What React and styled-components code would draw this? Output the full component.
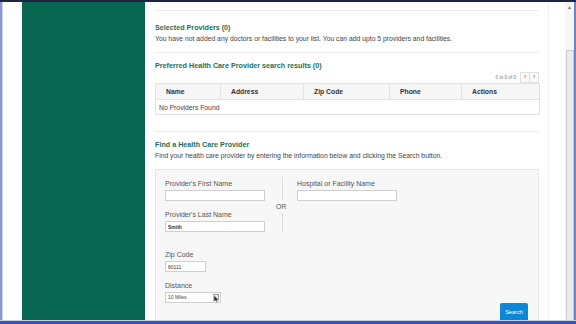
import styled, { createGlobalStyle } from "styled-components";

const GlobalStyle = createGlobalStyle`
  html, body {
    margin: 0;
    padding: 0;
    overflow: hidden;
    background: #ffffff;
    font-family: "Liberation Sans", Arial, sans-serif;
  }
`;

const Screen = styled.div`
  width: 576px;
  height: 324px;
  display: flex;
  flex-direction: column;
  overflow: hidden;
`;

const TopEdge = styled.div`
  height: 2px;
  background: #1c2640;
  flex-shrink: 0;
`;

const BottomEdge = styled.div`
  height: 3px;
  flex-shrink: 0;
  background: #3b55b5;
  border-top: 1px solid #c7cdee;
`;

const Middle = styled.div`
  flex: 1;
  display: flex;
  min-height: 0;
`;

const LeftEdge = styled.div`
  width: 20px;
  background: #ffffff;
  border-left: 2px solid #8c97d6;
  box-shadow: inset 1px 0 0 #cfd4f2;
`;

const Sidebar = styled.div`
  width: 123px;
  background: #076650;
`;

const Main = styled.div`
  flex: 1;
  background: #ffffff;
  display: flex;
  overflow: hidden;
`;

const Content = styled.div`
  width: 384px;
  margin-left: 10px;
  display: flex;
  flex-direction: column;
`;

const Gutter = styled.div`
  width: 9px;
`;

const PageLine = styled.div`
  width: 1px;
  background: #f1f1f1;
`;

const Scrollbar = styled.div`
  width: 11px;
  margin-left: auto;
  background: #f6f6f6;
  border-right: 2px solid #6f80cf;
  display: flex;
  flex-direction: column;
  align-items: center;
  box-sizing: border-box;
`;

const ScrollArrow = styled.div`
  font-size: 5px;
  color: #777;
  height: 10px;
  line-height: 10px;
`;

const ScrollThumb = styled.div`
  margin-top: 38px;
  width: 8px;
  flex: 1;
  background: #ececec;
  border: 1px solid #c5c9d8;
  border-bottom: none;
  box-sizing: border-box;
`;

const Rule = styled.div`
  height: 1px;
  background: #ececec;
  margin-top: ${p => p.$top}px;
`;

const Heading = styled.div`
  font-size: 7.2px;
  font-weight: bold;
  color: #236e5b;
  margin-top: ${p => p.$top}px;
  line-height: 8px;
`;

const Text = styled.div`
  font-size: 6.8px;
  color: #444;
  margin-top: 3px;
  line-height: 8px;
  white-space: nowrap;
`;

const Pager = styled.div`
  display: flex;
  justify-content: flex-end;
  align-items: center;
  gap: 5px;
  margin-top: 2px;
  height: 10px;
`;

const PagerInfo = styled.span`
  font-size: 4.6px;
  color: #777;
`;

const PagerButtons = styled.div`
  display: flex;
`;

const PagerButton = styled.div`
  width: 8px;
  height: 9px;
  border: 1px solid #e0e0e0;
  margin-left: -1px;
  font-size: 6.5px;
  line-height: 8px;
  text-align: center;
  color: #666;
  background: #fafafa;
`;

const Table = styled.table`
  width: 384px;
  border-collapse: collapse;
  margin-top: 1px;
  table-layout: fixed;
  font-size: 6.8px;
`;

const Th = styled.th`
  width: ${p => p.$w - 11}px;
  height: 15px;
  padding: 0 0 0 10px;
  text-align: left;
  background: #f6f6f6;
  border: 1px solid #e3e3e3;
  color: #333;
  font-weight: bold;
`;

const Td = styled.td`
  height: 14px;
  padding: 0 0 0 3px;
  border: 1px solid #e3e3e3;
  color: #444;
`;

const Panel = styled.div`
  margin-top: 9px;
  flex: 1;
  background: #f7f7f7;
  border: 1px solid #e6e6e6;
  border-bottom: none;
  padding: 7px 9px 0 9px;
  display: flex;
  flex-direction: column;
`;

const NameRow = styled.div`
  display: flex;
`;

const Column = styled.div`
  display: flex;
  flex-direction: column;
  width: 100px;
`;

const OrColumn = styled.div`
  width: 32px;
  display: flex;
  flex-direction: column;
  align-items: center;
`;

const OrLine = styled.div`
  width: 1px;
  background: #dcdcdc;
  height: ${p => p.$h}px;
  margin-left: 2px;
`;

const OrText = styled.div`
  font-size: 6.8px;
  color: #555;
  line-height: 13px;
`;

const Label = styled.div`
  font-size: 7px;
  color: #555;
  line-height: 8px;
  margin-top: ${p => p.$top || 0}px;
`;

const Input = styled.input`
  width: ${p => p.$w}px;
  height: 11px;
  box-sizing: border-box;
  margin: 2px 0 0 0;
  padding: 0 2px;
  border: 1px solid #cfcfcf;
  background: #ffffff;
  font-family: "Liberation Sans", Arial, sans-serif;
  font-size: 5px;
  font-weight: ${p => (p.$bold ? "bold" : "normal")};
  color: #333;
  outline: none;
`;

const SelectBox = styled.div`
  position: relative;
  width: 56px;
  height: 11px;
  box-sizing: border-box;
  margin-top: 2px;
  border: 1px solid #cfcfcf;
  background: #ffffff;
  font-size: 5px;
  color: #444;
  line-height: 9px;
  padding-left: 2px;
`;

const SelectArrow = styled.div`
  position: absolute;
  right: 1px;
  top: 1px;
  width: 6px;
  height: 7px;
  background: #e8e8e8;
  border: 1px solid #9a9a9a;
  box-sizing: border-box;
`;

const Cursor = styled.svg`
  position: absolute;
  right: 0;
  top: 1px;
`;

const ButtonRow = styled.div`
  display: flex;
  justify-content: flex-end;
  margin-top: auto;
  padding-right: 1px;
`;

const SearchButton = styled.button`
  width: 28px;
  height: 17px;
  border: none;
  border-radius: 2px 2px 0 0;
  background: #0b89d6;
  color: #ffffff;
  font-family: "Liberation Sans", Arial, sans-serif;
  font-size: 5.6px;
  padding: 0;
`;

export default function App() {
    const columns = [
        { name: "Name", w: 65 },
        { name: "Address", w: 83 },
        { name: "Zip Code", w: 86 },
        { name: "Phone", w: 72 },
        { name: "Actions", w: 78 },
    ];

    return (
        <Screen>
            <GlobalStyle />
            <TopEdge />
            <Middle>
                <LeftEdge />
                <Sidebar />
                <Main>
                    <Content>
                        <Rule $top={8} />
                        <Heading $top={13}>Selected Providers (0)</Heading>
                        <Text>You have not added any doctors or facilities to your list. You can add upto 5 providers and facilities.</Text>
                        <Rule $top={9} />
                        <Heading $top={9}>Preferred Health Care Provider search results (0)</Heading>
                        <Pager>
                            <PagerInfo>0 to 0 of 0</PagerInfo>
                            <PagerButtons>
                                <PagerButton>‹</PagerButton>
                                <PagerButton>›</PagerButton>
                            </PagerButtons>
                        </Pager>
                        <Table>
                            <thead>
                                <tr>
                                    {columns.map(c => (
                                        <Th key={c.name} $w={c.w}>{c.name}</Th>
                                    ))}
                                </tr>
                            </thead>
                            <tbody>
                                <tr>
                                    <Td colSpan={5}>No Providers Found</Td>
                                </tr>
                            </tbody>
                        </Table>
                        <Rule $top={16} />
                        <Heading $top={9}>Find a Health Care Provider</Heading>
                        <Text>Find your health care provider by entering the information below and clicking the Search button.</Text>
                        <Panel>
                            <NameRow>
                                <Column>
                                    <Label $top={3}>Provider's First Name</Label>
                                    <Input $w={100} readOnly value="" />
                                    <Label $top={10}>Provider's Last Name</Label>
                                    <Input $w={100} $bold readOnly value="Smith" />
                                </Column>
                                <OrColumn>
                                    <OrLine $h={23} />
                                    <OrText>OR</OrText>
                                    <OrLine $h={20} />
                                </OrColumn>
                                <Column>
                                    <Label $top={3}>Hospital or Facility Name</Label>
                                    <Input $w={100} readOnly value="" />
                                </Column>
                            </NameRow>
                            <Label $top={18}>Zip Code</Label>
                            <Input $w={41} readOnly value="80111" />
                            <Label $top={10}>Distance</Label>
                            <SelectBox>
                                10 Miles
                                <SelectArrow />
                                <Cursor width="7" height="10" viewBox="0 0 7 10">
                                    <path d="M1 1 L1 8 L2.6 6.6 L3.8 9.2 L4.8 8.8 L3.7 6.3 L5.8 6.2 Z" fill="#222" stroke="#fff" strokeWidth="0.6" />
                                </Cursor>
                            </SelectBox>
                            <ButtonRow>
                                <SearchButton>Search</SearchButton>
                            </ButtonRow>
                        </Panel>
                    </Content>
                    <Gutter />
                    <PageLine />
                    <Scrollbar>
                        <ScrollArrow>▲</ScrollArrow>
                        <ScrollThumb />
                    </Scrollbar>
                </Main>
            </Middle>
            <BottomEdge />
        </Screen>
    );
}
